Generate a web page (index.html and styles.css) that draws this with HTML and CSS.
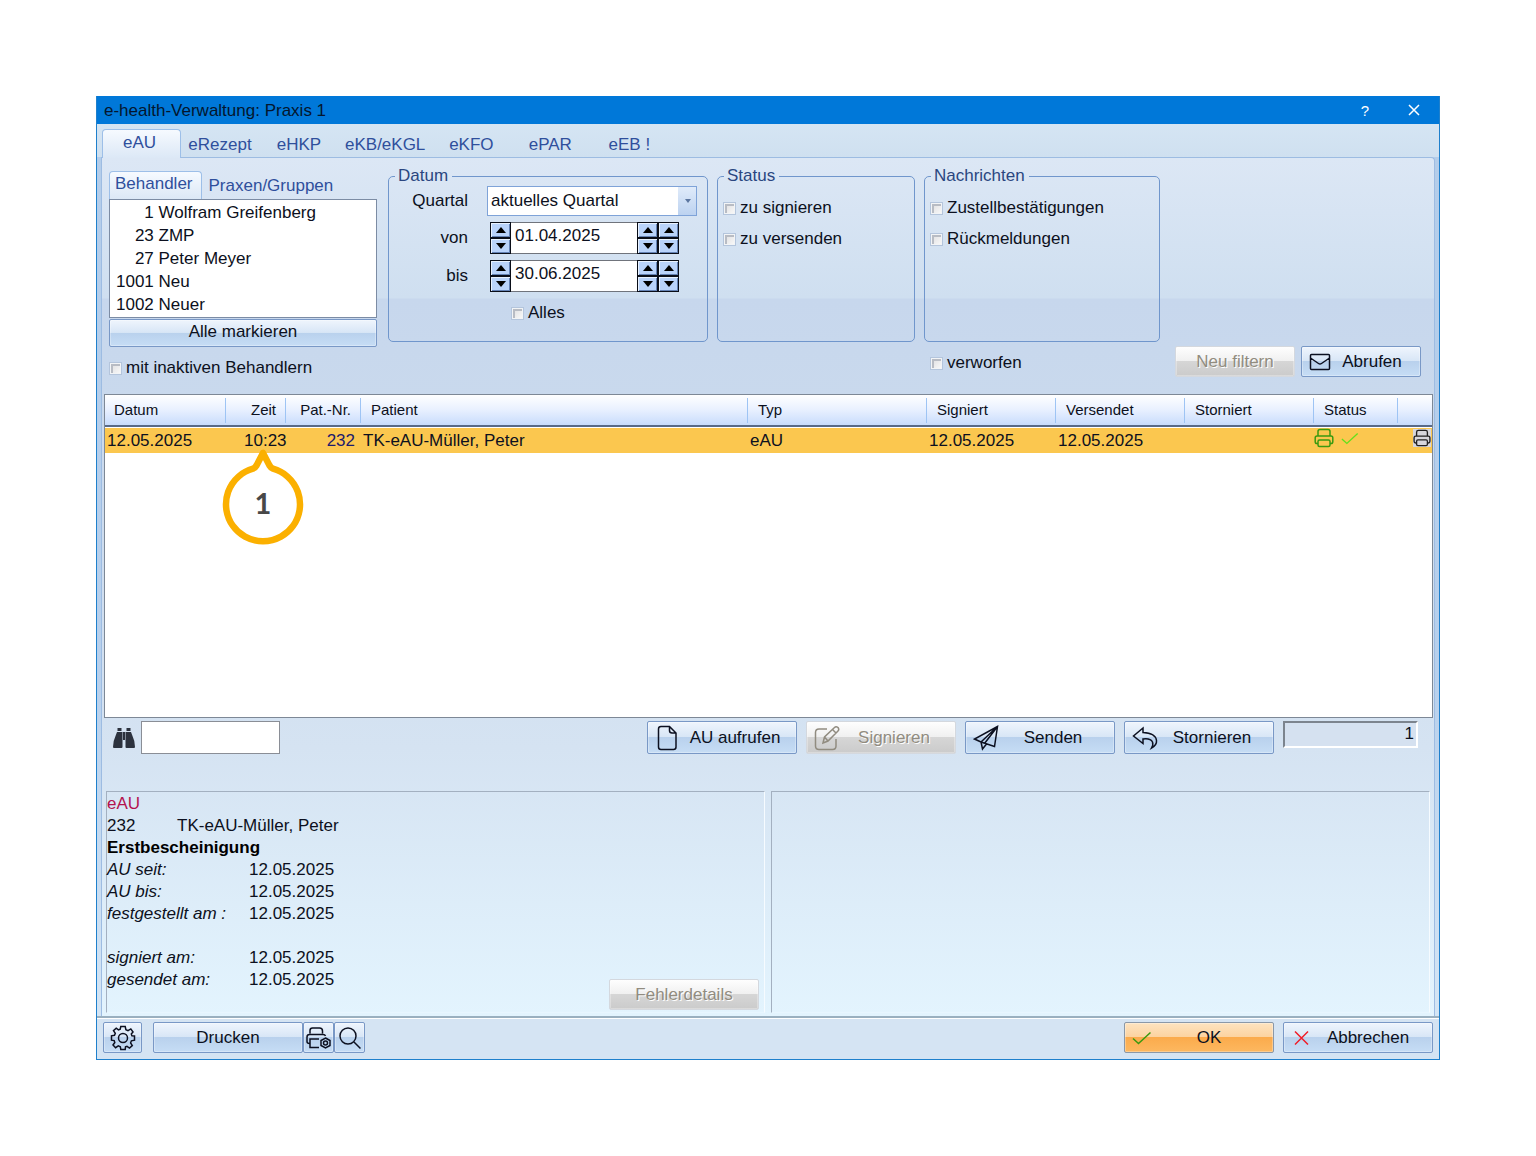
FILE: index.html
```html
<!DOCTYPE html>
<html lang="de">
<head>
    <meta charset="UTF-8">
    <meta name="viewport" content="width=device-width, initial-scale=1.0">
    <title>e-health-Verwaltung</title>
    <link rel="stylesheet" href="styles.css">
</head>
<body>
    <!-- Symbole -->
    <svg class="symbols" aria-hidden="true">
        <symbol id="printer" viewBox="0 0 20 20">
            <path d="M4 7.500V3.500Q4 1.500 6 1.500H14Q16 1.500 16 3.500V7.500M4 15.500H3Q1.200 15.500 1.200 13.700V9.700Q1.200 7.900 3 7.900H17Q18.800 7.900 18.800 9.700V13.700Q18.800 15.500 17 15.500H16M5.500 12H14.500Q16 12 16 13.500V17Q16 18.500 14.500 18.500H5.500Q4 18.500 4 17V13.500Q4 12 5.500 12Z"/>
        </symbol>
        <symbol id="check" viewBox="0 0 20 14">
            <path d="M1 7.500L6.500 12.500L18.500 1.500"/>
        </symbol>
    </svg>

    <div class="window">
        <header class="titlebar">
            <h1>e-health-Verwaltung: Praxis 1</h1>
            <button class="title-btn" type="button" aria-label="Hilfe">?</button>
            <button class="title-btn" type="button" aria-label="Schließen">
                <svg width="12" height="12" viewBox="0 0 12 12"><path d="M1 1L11 11M11 1L1 11"/></svg>
            </button>
        </header>

        <nav class="tabs">
            <button class="tab active" type="button">eAU</button>
            <button class="tab" type="button">eRezept</button>
            <button class="tab" type="button">eHKP</button>
            <button class="tab" type="button">eKB/eKGL</button>
            <button class="tab" type="button">eKFO</button>
            <button class="tab" type="button">ePAR</button>
            <button class="tab" type="button">eEB !</button>
        </nav>

        <main class="page">
            <!-- Filter -->
            <form class="filter">
                <div class="behandler">
                    <div class="subtabs">
                        <button class="subtab active" type="button">Behandler</button>
                        <button class="subtab" type="button">Praxen/Gruppen</button>
                    </div>
                    <select class="liste" size="5" multiple aria-label="Behandler">
                        <option>&nbsp;&nbsp;&nbsp;&nbsp;&nbsp;&nbsp;1 Wolfram Greifenberg</option>
                        <option>&nbsp;&nbsp;&nbsp;&nbsp;23 ZMP</option>
                        <option>&nbsp;&nbsp;&nbsp;&nbsp;27 Peter Meyer</option>
                        <option>1001 Neu</option>
                        <option>1002 Neuer</option>
                    </select>
                    <button class="btn small" type="button">Alle markieren</button>
                    <label class="tick inaktiv"><input type="checkbox">mit inaktiven Behandlern</label>
                </div>

                <fieldset class="group datum">
                    <legend>Datum</legend>
                    <label for="quartal">Quartal</label>
                    <div class="drop">
                        <select id="quartal"><option>aktuelles Quartal</option></select>
                    </div>
                    <label for="von">von</label>
                    <div class="datefield">
                        <div class="spin"><button type="button" class="up" aria-label="Tag vor"></button><button type="button" class="down" aria-label="Tag zurück"></button></div>
                        <input id="von" type="text" value="01.04.2025">
                        <div class="spin"><button type="button" class="up" aria-label="Monat vor"></button><button type="button" class="down" aria-label="Monat zurück"></button></div>
                        <div class="spin"><button type="button" class="up" aria-label="Jahr vor"></button><button type="button" class="down" aria-label="Jahr zurück"></button></div>
                    </div>
                    <label for="bis">bis</label>
                    <div class="datefield">
                        <div class="spin"><button type="button" class="up" aria-label="Tag vor"></button><button type="button" class="down" aria-label="Tag zurück"></button></div>
                        <input id="bis" type="text" value="30.06.2025">
                        <div class="spin"><button type="button" class="up" aria-label="Monat vor"></button><button type="button" class="down" aria-label="Monat zurück"></button></div>
                        <div class="spin"><button type="button" class="up" aria-label="Jahr vor"></button><button type="button" class="down" aria-label="Jahr zurück"></button></div>
                    </div>
                    <label class="tick alles"><input type="checkbox">Alles</label>
                </fieldset>

                <fieldset class="group">
                    <legend>Status</legend>
                    <label class="tick"><input type="checkbox">zu signieren</label>
                    <label class="tick"><input type="checkbox">zu versenden</label>
                </fieldset>

                <div class="nachrichten">
                    <fieldset class="group">
                        <legend>Nachrichten</legend>
                        <label class="tick"><input type="checkbox">Zustellbestätigungen</label>
                        <label class="tick"><input type="checkbox">Rückmeldungen</label>
                    </fieldset>
                    <label class="tick verworfen"><input type="checkbox">verworfen</label>
                </div>

                <div class="filter-btns">
                    <button class="btn" type="button" disabled>Neu filtern</button>
                    <button class="btn" type="button">
                        <svg width="22" height="18" viewBox="0 0 22 18"><path d="M2.500 1.500H19.500Q20.500 1.500 20.500 2.500V15.500Q20.500 16.500 19.500 16.500H2.500Q1.500 16.500 1.500 15.500V2.500Q1.500 1.500 2.500 1.500ZM1.500 5L9.500 10.500Q11 11.500 12.500 10.500L20.500 5"/></svg>
                        <span>Abrufen</span>
                    </button>
                </div>
            </form>

            <!-- Liste der Bescheinigungen -->
            <div class="list">
                <table>
                    <colgroup>
                        <col class="c-datum"><col class="c-zeit"><col class="c-nr"><col><col class="c-typ">
                        <col class="c-date"><col class="c-date"><col class="c-date"><col class="c-status"><col class="c-print">
                    </colgroup>
                    <thead>
                        <tr>
                            <th>Datum</th>
                            <th class="right">Zeit</th>
                            <th class="right">Pat.-Nr.</th>
                            <th>Patient</th>
                            <th>Typ</th>
                            <th>Signiert</th>
                            <th>Versendet</th>
                            <th>Storniert</th>
                            <th>Status</th>
                            <th></th>
                        </tr>
                    </thead>
                    <tbody>
                        <tr>
                            <td>12.05.2025</td>
                            <td class="zeit">10:23
                                <div class="callout">
                                    <svg width="82" height="98" viewBox="0 0 82 98"><path d="M41 5L34.500 17.500Q33 20 31 20.700A37 37 0 1 0 51 20.700Q49 20 47.500 17.500Z"/></svg>
                                    <span>1</span>
                                </div>
                            </td>
                            <td class="nr">232</td>
                            <td>TK-eAU-Müller, Peter</td>
                            <td>eAU</td>
                            <td>12.05.2025</td>
                            <td>12.05.2025</td>
                            <td></td>
                            <td class="stat">
                                <div class="status">
                                    <svg class="green" width="20" height="20"><use href="#printer"/></svg>
                                    <svg class="lime" width="18" height="13"><use href="#check"/></svg>
                                </div>
                            </td>
                            <td class="stat">
                                <button class="row-print" type="button" aria-label="Drucken"><svg width="18" height="18"><use href="#printer"/></svg></button>
                            </td>
                        </tr>
                    </tbody>
                </table>
            </div>

            <div class="actions">
                <label class="such" for="suche" aria-label="Suchen">
                    <svg width="22" height="20" viewBox="0 0 22 20"><path d="M4.500 0H8.500V3H4.500ZM13.500 0H17.500V3H13.500ZM4 4H9.500V19Q9.500 20 8.500 20H1Q0 20 0 19Q0 13 2.500 8ZM12.500 4H18L19.500 8Q22 13 22 19Q22 20 21 20H13.500Q12.500 20 12.500 19ZM10 4H12V12H10Z"/></svg>
                </label>
                <input class="suchfeld" id="suche" type="text">
                <div class="action-btns">
                    <button class="btn" type="button">
                        <svg width="26" height="26" viewBox="0 0 26 26"><path d="M6 1.500H14.500L21 8V22Q21 24.500 18.500 24.500H6Q3.500 24.500 3.500 22V4Q3.500 1.500 6 1.500ZM14.500 1.500V5.500Q14.500 8 17 8H21"/></svg>
                        <span>AU aufrufen</span>
                    </button>
                    <button class="btn" type="button" disabled>
                        <svg width="26" height="26" viewBox="0 0 26 26"><path d="M13 4H5Q1.500 4 1.500 7.500V21Q1.500 24.500 5 24.500H18.500Q22 24.500 22 21V14M9 18L10.500 12L20.500 2.500Q22 1 24 2.500Q25.500 4.500 24 6L14 16ZM18.500 4.500L22 8M10.500 12L14 16"/></svg>
                        <span>Signieren</span>
                    </button>
                    <button class="btn" type="button">
                        <svg width="26" height="26" viewBox="0 0 26 26"><path d="M24.500 1.500L1.500 14L8 17L21.500 21.500ZM24.500 1.500L8 17L9.500 24L13.500 19M24.500 1.500L11.500 18.500"/></svg>
                        <span>Senden</span>
                    </button>
                    <button class="btn" type="button">
                        <svg width="26" height="26" viewBox="0 0 26 26"><path d="M11 3L1.500 11L11 18.500V14Q18.500 13 20.500 17Q21.500 19.500 19.500 23Q25 20 24.500 15.500Q23.500 8 11 7.500Z"/></svg>
                        <span>Stornieren</span>
                    </button>
                    <output class="anzahl">1</output>
                </div>
            </div>

            <!-- Details -->
            <div class="panes">
                <section class="pane">
                    <div class="detail">
                        <p class="art">eAU</p>
                        <p class="patient"><span>232</span><span>TK-eAU-Müller, Peter</span></p>
                        <p><b>Erstbescheinigung</b></p>
                        <dl>
                            <dt>AU seit:</dt><dd>12.05.2025</dd>
                            <dt>AU bis:</dt><dd>12.05.2025</dd>
                            <dt>festgestellt am :</dt><dd>12.05.2025</dd>
                        </dl>
                        <dl>
                            <dt>signiert am:</dt><dd>12.05.2025</dd>
                            <dt>gesendet am:</dt><dd>12.05.2025</dd>
                        </dl>
                    </div>
                    <button class="btn" type="button" disabled>Fehlerdetails</button>
                </section>
                <section class="pane"></section>
            </div>
        </main>

        <footer class="bottom">
            <button class="btn gear" type="button" aria-label="Einstellungen">
                <svg width="26" height="26" viewBox="0 0 26 26"><path d="M10.800 1.500H15.200L15.900 4.700L18 5.600L20.800 3.900L23 7L21.300 8.900L21.900 10.800L24.500 11V15.200L21.400 15.800L20.600 17.800L22.300 20.500L19.500 23L17 21.300L15.500 21.900L15.200 24.500H10.800L10.300 21.700L8.300 20.900L5.600 22.700L3 20L4.800 17.500L4.200 15.600L1.500 15.200V10.800L4.500 10.300L5.300 8.300L3.500 5.600L6.200 3.200L8.500 4.900L10.200 4.200Z"/><circle cx="13" cy="13" r="4.500"/></svg>
            </button>
            <div class="print">
                <button class="btn wide" type="button">Drucken</button>
                <button class="btn icon" type="button" aria-label="Druckereinstellungen">
                    <svg width="26" height="24" viewBox="0 0 26 24"><path d="M4 7.500V4.500Q4 2 6.500 2H13.500Q16.500 2 16.500 5V7.500M3.500 17.500Q1 17.500 1 15.500V11Q1 8.500 3.500 8.500H17Q19 8.500 19.500 10M13 13H4V21.500H13M19.500 12L24 14.500V19.500L19.500 22L15 19.500V14.500Z"/><circle cx="19.500" cy="17" r="2"/></svg>
                </button>
                <button class="btn icon" type="button" aria-label="Vorschau">
                    <svg width="24" height="24" viewBox="0 0 24 24"><circle cx="10" cy="10" r="8"/><path d="M16 16L22.500 22.500"/></svg>
                </button>
            </div>
            <button class="btn wide ok" type="submit">
                <svg class="green" width="20" height="14"><use href="#check"/></svg>
                <span>OK</span>
            </button>
            <button class="btn wide" type="button">
                <svg class="red" width="20" height="16" viewBox="0 0 20 16"><path d="M4 1.500L17 14.500M17 1.500L4 14.500"/></svg>
                <span>Abbrechen</span>
            </button>
        </footer>
    </div>
</body>
</html>
```
FILE: styles.css
```css
*{
    box-sizing: border-box;
}
body{
    margin: 0;
    padding: 96px;
    min-height: 100vh;
    display: flex;
    background-color: #fff;
    color: #0c1020;
    font: 17px/20px "Liberation Sans", Arial, sans-serif;
}
button, input, select, output{
    font: inherit;
    color: inherit;
}
button{
    padding: 0;
}
h1, p, dl, dd{
    margin: 0;
}
svg{
    flex: none;
    fill: none;
    stroke: currentColor;
    stroke-width: 1.5;
}
.symbols{
    position: absolute;
    width: 0;
    height: 0;
}

/* Fenster */
.window{
    flex: 1;
    min-width: 0;
    display: flex;
    flex-direction: column;
    border: 1px solid #1f80cc;
    border-top: 0;
    background: linear-gradient(#d3e3f3, #b4cdea 60px, #b8d0ec 60%, #d8e8f6);
}
.titlebar{
    display: flex;
    align-items: center;
    height: 28px;
    padding: 1px 11px 0 7px;
    background-color: #0078d9;
}
.titlebar h1{
    flex: 1;
    font-size: 17px;
    font-weight: normal;
    color: #04162e;
}
.title-btn{
    width: 28px;
    height: 27px;
    border: 0;
    background: none;
    color: #fff;
    font-size: 15px;
}
.title-btn + .title-btn{
    margin-left: 21px;
}

/* Reiter */
.tabs{
    display: flex;
    height: 33px;
    padding: 5px 5px 0;
    background: linear-gradient(#d5e5f3, #cfe0f0);
}
.tab, .subtab{
    border: 1px solid transparent;
    border-bottom: 0;
    background: none;
    color: #2f4f9c;
}
.tab{
    min-width: 79px;
    padding: 2px 6px 0 5px;
}
.tab.active{
    padding: 0 8px 2px 4px;
    margin-bottom: -1px;
    position: relative;
    border-color: #9dbfe8;
    border-radius: 4px 4px 0 0;
    background: linear-gradient(#f6faff, #dce8f6);
}
.page{
    flex: 1;
    display: flex;
    flex-direction: column;
    margin: 0 4px;
    border: 1px solid #9dbce2;
    border-bottom: 0;
    border-radius: 0 4px 0 0;
    background: linear-gradient(#dce7f5 0, #cfdff0 140px, #c7d7ed 141px, #c9d9ed 240px, #d5e3f2 590px, #e3f4fe 100%);
}

/* Filter */
.filter{
    display: grid;
    grid-template-columns: 270px 320px 198px 236px 1fr;
    column-gap: 9px;
    padding: 7px 13px 16px 7px;
}
.behandler{
    display: flex;
    flex-direction: column;
    padding-top: 6px;
    margin-right: 2px;
}
.subtabs{
    display: flex;
    height: 28px;
}
.subtab{
    padding: 0 6px;
}
.subtab.active{
    padding: 0 8px 3px 5px;
    border-color: #9dbfe8;
    border-radius: 4px 4px 0 0;
    background: linear-gradient(#f6faff, #dce8f6);
}
.liste{
    height: 119px;
    padding: 2px 0;
    border: 1px solid #7c8ca4;
    border-radius: 0;
    background-color: #fff;
    overflow: hidden;
}
.liste option{
    height: 23px;
    min-height: 23px;
    padding: 1px 6px;
}
.tick{
    display: flex;
    align-items: center;
    gap: 4px;
}
.tick input{
    appearance: none;
    flex: none;
    width: 13px;
    height: 13px;
    margin: 0;
    border: 1px solid #b4c5dc;
    background: linear-gradient(135deg, #dcdcde, #fafafa);
    box-shadow: inset 0 0 0 1px #f2f4f6, inset 2px 2px 0 1px #b8bcc4;
}
.inaktiv{
    margin-top: 11px;
}

.group{
    min-width: 0;
    height: 176px;
    margin: 1px 0 0;
    padding: 12px 5px 0;
    border: 1px solid #7096cc;
    border-radius: 5px;
}
.group legend{
    margin-left: 1px;
    padding: 0 4px 0 3px;
    line-height: 20px;
    color: #2a4680;
}
.group .tick{
    height: 20px;
    margin-bottom: 11px;
}
.datum{
    display: grid;
    grid-template-columns: 74px minmax(0, 1fr);
    grid-template-rows: 30px 32px 32px 30px;
    gap: 6px 19px;
    align-items: center;
    padding: 0 10px 0 5px;
}
.datum > label{
    text-align: right;
}
.drop{
    position: relative;
}
.drop select{
    appearance: none;
    display: block;
    width: 100%;
    height: 30px;
    padding: 0 24px 0 3px;
    border: 1px solid #7fa3d8;
    border-radius: 0;
    background: linear-gradient(#e0ebfa, #bcd2f0) right / 18px 100% no-repeat #fff;
}
.drop::after{
    content: '';
    position: absolute;
    right: 6px;
    top: 13px;
    border: 3px solid transparent;
    border-top: 4px solid #5c76a0;
    border-bottom: 0;
}
.datefield{
    display: flex;
    height: 32px;
    margin: 0 18px 0 3px;
}
.datefield input{
    flex: 1;
    min-width: 0;
    padding: 0 4px 4px;
    border: 1px solid #70747c;
    border-width: 1px 0;
    border-radius: 0;
    background-color: #fff;
}
.spin{
    display: grid;
    width: 21px;
}
.spin button{
    display: grid;
    place-items: center;
    border: 1px solid #0a0e18;
    background-color: #b9d3fa;
    box-shadow: inset 1px 1px 0 #e8f2ff, inset -1px -1px 0 #6482b4;
}
.spin button::before{
    content: '';
    border: 5px solid transparent;
}
.spin .up::before{
    border-top: 0;
    border-bottom: 6px solid #000;
}
.spin .down::before{
    border-bottom: 0;
    border-top: 6px solid #000;
}
.datum .alles{
    grid-column: 2;
    margin: 0 0 0 24px;
}
.verworfen{
    margin: 11px 0 0 6px;
}
.filter-btns{
    display: flex;
    justify-content: flex-end;
    align-items: flex-end;
    gap: 6px;
    padding-bottom: 1px;
}
.filter-btns .btn{
    width: 120px;
    height: 31px;
}

/* Schaltflächen */
.btn{
    display: flex;
    align-items: center;
    justify-content: center;
    width: 150px;
    height: 33px;
    padding: 0 7px;
    border: 1px solid #7998c6;
    border-radius: 2px;
    background: linear-gradient(#eff5fd, #d8e6f6 48%, #b9d1ed 50%, #c6ddf5);
    box-shadow: inset 0 0 0 1px rgba(255, 255, 255, 0.3);
}
.btn span{
    flex: 1;
    text-align: center;
}
.btn:disabled{
    border-color: #d4d8de;
    background: linear-gradient(#fefefe, #f0f0f0 48%, #d6d6d6 50%, #cbcbcb);
    color: #918c80;
    text-shadow: 1px 1px 0 #fff;
}
.btn.small{
    width: auto;
    height: 28px;
    margin-top: 1px;
    padding-bottom: 2px;
}

/* Tabelle */
.list{
    flex: 1;
    margin: 0 1px 0 2px;
    border: 1px solid #7d8896;
    background-color: #fff;
}
table{
    width: 100%;
    table-layout: fixed;
    border-collapse: separate;
    border-spacing: 0;
}
.c-datum{
    width: 121px;
}
.c-zeit{
    width: 60px;
}
.c-nr{
    width: 75px;
}
.c-typ{
    width: 179px;
}
.c-date{
    width: 129px;
}
.c-status{
    width: 84px;
}
.c-print{
    width: 34px;
}
th{
    height: 32px;
    padding: 0 10px;
    border-bottom: 2px solid #586a88;
    background: linear-gradient(#9ec4f4, #9ec4f4) right 3px / 1px 25px no-repeat, linear-gradient(#fff, #e8f0ff 50%, #c8dcfc);
    font-size: 15px;
    font-weight: normal;
    text-align: left;
}
th:first-child{
    padding-left: 9px;
}
th:last-child{
    background: linear-gradient(#fff, #e8f0ff 50%, #c8dcfc);
}
th.right{
    padding-left: 0;
    text-align: right;
}
td{
    height: 26px;
    padding: 0 0 0 2px;
    border-top: 1px solid #fff;
    background-color: #fbc74f;
    white-space: nowrap;
}
td.zeit{
    position: relative;
    padding-left: 18px;
}
td.nr{
    padding-right: 6px;
    text-align: right;
    color: #1c1a6c;
}
td.stat{
    padding: 0;
    vertical-align: top;
}
.status{
    display: flex;
    gap: 7px;
    align-items: center;
}
.green{
    color: #3a9a10;
}
.lime{
    color: #63e01c;
}
.red{
    color: #f01c28;
}
.row-print{
    display: block;
    width: 18px;
    height: 18px;
    margin: 1px 1px 0 auto;
    border: 0;
    background-color: #d6d6dc;
    color: #222;
}

/* Hinweis-Nummer über der Liste */
.callout{
    position: absolute;
    z-index: 1;
    top: 20px;
    right: -18px;
    width: 82px;
    height: 98px;
    display: flex;
    justify-content: center;
    padding-top: 37px;
}
.callout svg{
    position: absolute;
    top: 0;
    left: 0;
    fill: #fff;
    stroke: #fbb000;
    stroke-width: 6.5;
    stroke-linejoin: round;
}
.callout span{
    position: relative;
    font: bold 29px/36px Lato, sans-serif;
    color: #484848;
}

.actions{
    display: flex;
    align-items: center;
    padding: 3px 16px 37px 11px;
}
.such svg{
    display: block;
    fill: #2c323e;
    stroke: none;
}
.suchfeld{
    width: 139px;
    height: 33px;
    margin-left: 6px;
    padding: 0 4px;
    border: 1px solid #8a8e96;
    background-color: #fff;
}
.action-btns{
    display: flex;
    gap: 9px;
    margin-left: auto;
}
.anzahl{
    width: 135px;
    height: 27px;
    padding-right: 2px;
    border: 2px solid #fff;
    border-top-color: #7c848e;
    border-left-color: #7c848e;
    background-color: #d5e1f0;
    line-height: 22px;
    text-align: right;
}

/* Detailbereich */
.panes{
    display: grid;
    grid-template-columns: 1fr 1fr;
    gap: 6px;
    padding: 0 4px 3px;
}
.pane{
    display: flex;
    justify-content: space-between;
    align-items: flex-end;
    min-height: 222px;
    padding: 1px 5px 2px 0;
    border: 1px solid #a3b0c0;
    border-right-color: #f6fbff;
    border-bottom-color: #e8f6ff;
}
.pane .btn{
    height: 31px;
}
.detail{
    align-self: flex-start;
    line-height: 22px;
}
.detail .art{
    color: #b4124e;
}
.patient span:first-child{
    display: inline-block;
    width: 70px;
}
.detail b{
    color: #000;
}
.detail dl{
    display: grid;
    grid-template-columns: 142px auto;
    margin-bottom: 22px;
}
.detail dl:last-child{
    margin-bottom: 0;
}
.detail dt{
    font-style: italic;
}

/* Fußzeile */
.bottom{
    display: flex;
    gap: 9px;
    padding: 4px 6px 6px;
    border-top: 2px solid #9ab0c0;
    box-shadow: inset 0 1px 0 #fff;
    background-color: #d5e4f3;
}
.bottom .btn{
    height: 31px;
}
.bottom .gear{
    width: 39px;
    margin-right: 2px;
    padding: 0;
}
.print{
    display: flex;
    margin-right: auto;
}
.bottom .icon{
    width: 31px;
    padding: 0;
}
.bottom .ok{
    border-color: #8a98a8;
    background: linear-gradient(#fde3c0, #fcd3a0 48%, #fbab4c 50%, #fdb860);
}
```
